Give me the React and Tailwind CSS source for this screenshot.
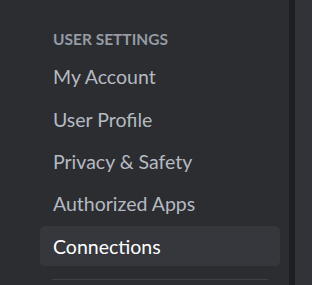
const items = ['My Account', 'User Profile', 'Privacy & Safety', 'Authorized Apps', 'Connections']

export default function App() {
  return (
    <div className="flex h-[285px] w-[312px] overflow-hidden font-['Lato',sans-serif]">
      {/* Sidebar */}
      <nav className="w-[289px] shrink-0 bg-[#2b2d31] pl-[40px] pr-[9px] pt-[29px]">
        <h2 className="px-[13px] pb-[7px] text-[15.5px] font-bold uppercase leading-[21px] text-[#949ba4]">
          User Settings
        </h2>
        <div className="flex flex-col gap-[2.3px]">
          {items.map((label) => (
            <div
              key={label}
              className={`flex h-[40px] items-center rounded-[5px] px-[13px] text-[19.5px] ${
                label === 'Connections' ? 'bg-[#35373c] text-white' : 'text-[#b5bac1]'
              }`}
            >
              {label}
            </div>
          ))}
        </div>
        <div className="mx-[12px] mt-[13px] h-px bg-[#3f4147]" />
      </nav>
      <div className="w-[6px] shrink-0 bg-[#1e1f22]" />
      <main className="flex-1 bg-[#313338]" />
    </div>
  )
}
